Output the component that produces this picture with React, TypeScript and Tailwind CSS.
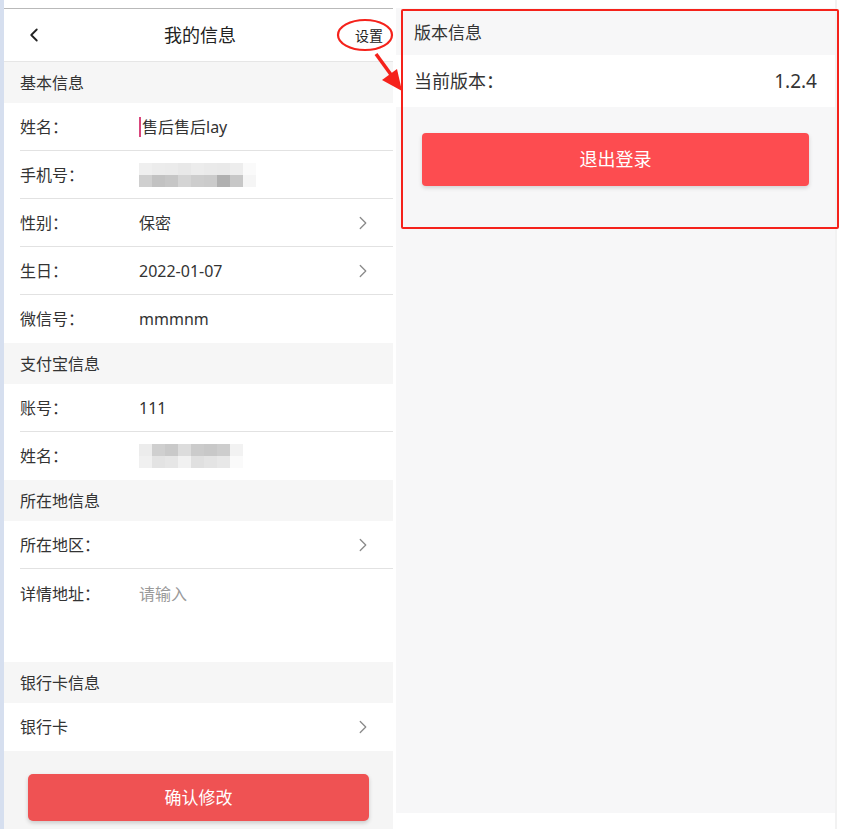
import { ChevronLeft, ChevronRight } from "lucide-react";

const font = "font-['Noto_Sans','Noto_Sans_CJK_SC',sans-serif]";

// mosaic blocks (blurred private data)
const phoneTop = ["bg-[#efefef]", "bg-[#ececec]", "bg-[#ebebeb]", "bg-[#e8e8e8]", "bg-[#ececec]", "bg-[#eaeaea]", "bg-[#e9e9e9]", "bg-[#ededed]", "bg-[#fafafa]"];
const phoneBottom = ["bg-[#cfcfcf]", "bg-[#c2c2c2]", "bg-[#c6c6c6]", "bg-[#d4d4d4]", "bg-[#cdcdcd]", "bg-[#cbcbcb]", "bg-[#b0b0b0]", "bg-[#c7c7c7]", "bg-[#f5f5f5]"];
const nameTop = ["bg-[#ececec]", "bg-[#cfcfcf]", "bg-[#c9c9c9]", "bg-[#dcdcdc]", "bg-[#cbcbcb]", "bg-[#c8c8c8]", "bg-[#cdcdcd]", "bg-[#f2f2f2]", "bg-[#ffffff]"];
const nameBottom = ["bg-[#f0f0f0]", "bg-[#e3e3e3]", "bg-[#e6e6e6]", "bg-[#f1f1f1]", "bg-[#e0e0e0]", "bg-[#e4e4e4]", "bg-[#e8e8e8]", "bg-[#fafafa]", "bg-[#ffffff]"];

const Mosaic = ({ top, bottom }: { top: string[]; bottom: string[] }) => (
  <div className="flex flex-col">
    <div className="flex">
      {top.map((c, i) => (
        <div key={i} className={`w-[13px] h-[12px] ${c}`} />
      ))}
    </div>
    <div className="flex">
      {bottom.map((c, i) => (
        <div key={i} className={`w-[13px] h-[12px] ${c}`} />
      ))}
    </div>
  </div>
);

const SectionTitle = ({ title }: { title: string }) => (
  <div className="h-[41px] flex items-center pl-[16px] text-[16px] text-[#333] bg-[#f6f6f6]">
    {title}
  </div>
);

type RowProps = {
  label: string;
  children?: React.ReactNode;
  arrow?: boolean;
  last?: boolean;
};

const Row = ({ label, children, arrow, last }: RowProps) => (
  <div className="bg-white pl-[16px]">
    <div
      className={`h-[48px] flex items-center pr-[19px] ${
        last ? "" : "border-b border-[#e2e2e2]"
      }`}
    >
      <span className="w-[119px] text-[16px] text-[#333] shrink-0">{label}</span>
      <div className="flex-1 text-[16px] text-[#333] flex items-center">{children}</div>
      {arrow && <ChevronRight size={22} strokeWidth={1.4} className="text-[#8a8a8a]" />}
    </div>
  </div>
);

export default function App() {
  return (
    <div className={`relative w-[860px] h-[829px] overflow-hidden flex bg-white ${font}`}>
      {/* left blue edge */}
      <div className="w-[4px] bg-[#d6dfef] shrink-0" />

      {/* 我的信息 page */}
      <div className="w-[389px] shrink-0 flex flex-col bg-[#f5f5f5]">
        <div className="h-[9px] bg-white border-b border-[#b9b9b9]" />
        <div className="h-[53px] bg-white border-b border-[#e6e6e6] flex items-center px-[20px]">
          <ChevronLeft size={22} strokeWidth={2} className="text-[#222] -ml-[1px]" />
          <span className="flex-1 text-center text-[18px] text-[#222]">我的信息</span>
          <span className="text-[14px] text-[#222] -mr-[10px]">设置</span>
        </div>

        <SectionTitle title="基本信息" />
        <Row label="姓名：">
          <span className="w-[2px] h-[20px] bg-[#d9467c] mr-[1px]" />
          <span>售后售后lay</span>
        </Row>
        <Row label="手机号：">
          <Mosaic top={phoneTop} bottom={phoneBottom} />
        </Row>
        <Row label="性别：" arrow>
          保密
        </Row>
        <Row label="生日：" arrow>
          2022-01-07
        </Row>
        <Row label="微信号：" last>
          mmmnm
        </Row>

        <SectionTitle title="支付宝信息" />
        <Row label="账号：">111</Row>
        <Row label="姓名：" last>
          <Mosaic top={nameTop} bottom={nameBottom} />
        </Row>

        <SectionTitle title="所在地信息" />
        <Row label="所在地区：" arrow />
        <div className="bg-white pl-[16px] h-[93px] flex items-start pt-[13px]">
          <span className="w-[119px] text-[16px] text-[#333] shrink-0">详情地址：</span>
          <span className="text-[16px] text-[#9a9a9a]">请输入</span>
        </div>

        <SectionTitle title="银行卡信息" />
        <Row label="银行卡" arrow last />

        <div className="px-[24px] pt-[23px]">
          <button className="w-full h-[47px] rounded-[5px] bg-[#ef5253] text-white text-[17px] shadow-[0_2px_4px_rgba(0,0,0,0.18)]">
            确认修改
          </button>
        </div>
      </div>

      <div className="w-[3px] bg-white shrink-0" />

      {/* 设置 page */}
      <div className="w-[439px] shrink-0 flex flex-col bg-[#f7f7f8]">
        <div className="h-[8px] bg-white" />
        <div className="h-[47px] flex items-center pl-[18px] text-[17px] text-[#333] pt-[2px]">
          版本信息
        </div>
        <div className="h-[52px] bg-white flex items-center justify-between pl-[18px] pr-[18px] text-[18px] text-[#333]">
          <span>当前版本：</span>
          <span className="text-[19px]">1.2.4</span>
        </div>
        <div className="pl-[26px] pr-[26px] pt-[26px]">
          <button className="w-full h-[53px] rounded-[4px] bg-[#fd4c50] text-white text-[18px] shadow-[0_2px_4px_rgba(0,0,0,0.15)]">
            退出登录
          </button>
        </div>
        <div className="flex-1" />
        <div className="h-[16px] bg-white" />
      </div>

      <div className="w-[2px] bg-[#f2f2f2] shrink-0" />
      <div className="flex-1 bg-white" />

      {/* annotations */}
      <div className="absolute left-[401px] top-[9px] w-[438px] h-[220px] border-[2px] border-[#f5221b] rounded-[2px] pointer-events-none" />
      <svg
        className="absolute left-0 top-0 pointer-events-none"
        width="860"
        height="120"
        viewBox="0 0 860 120"
      >
        <ellipse cx="365" cy="35" rx="27" ry="15" fill="none" stroke="#f5221b" strokeWidth="2.2" />
        <line x1="376" y1="54" x2="392" y2="76" stroke="#f5221b" strokeWidth="3.5" />
        <polygon points="402,91 382,80 397,69" fill="#f5221b" />
      </svg>
    </div>
  );
}
